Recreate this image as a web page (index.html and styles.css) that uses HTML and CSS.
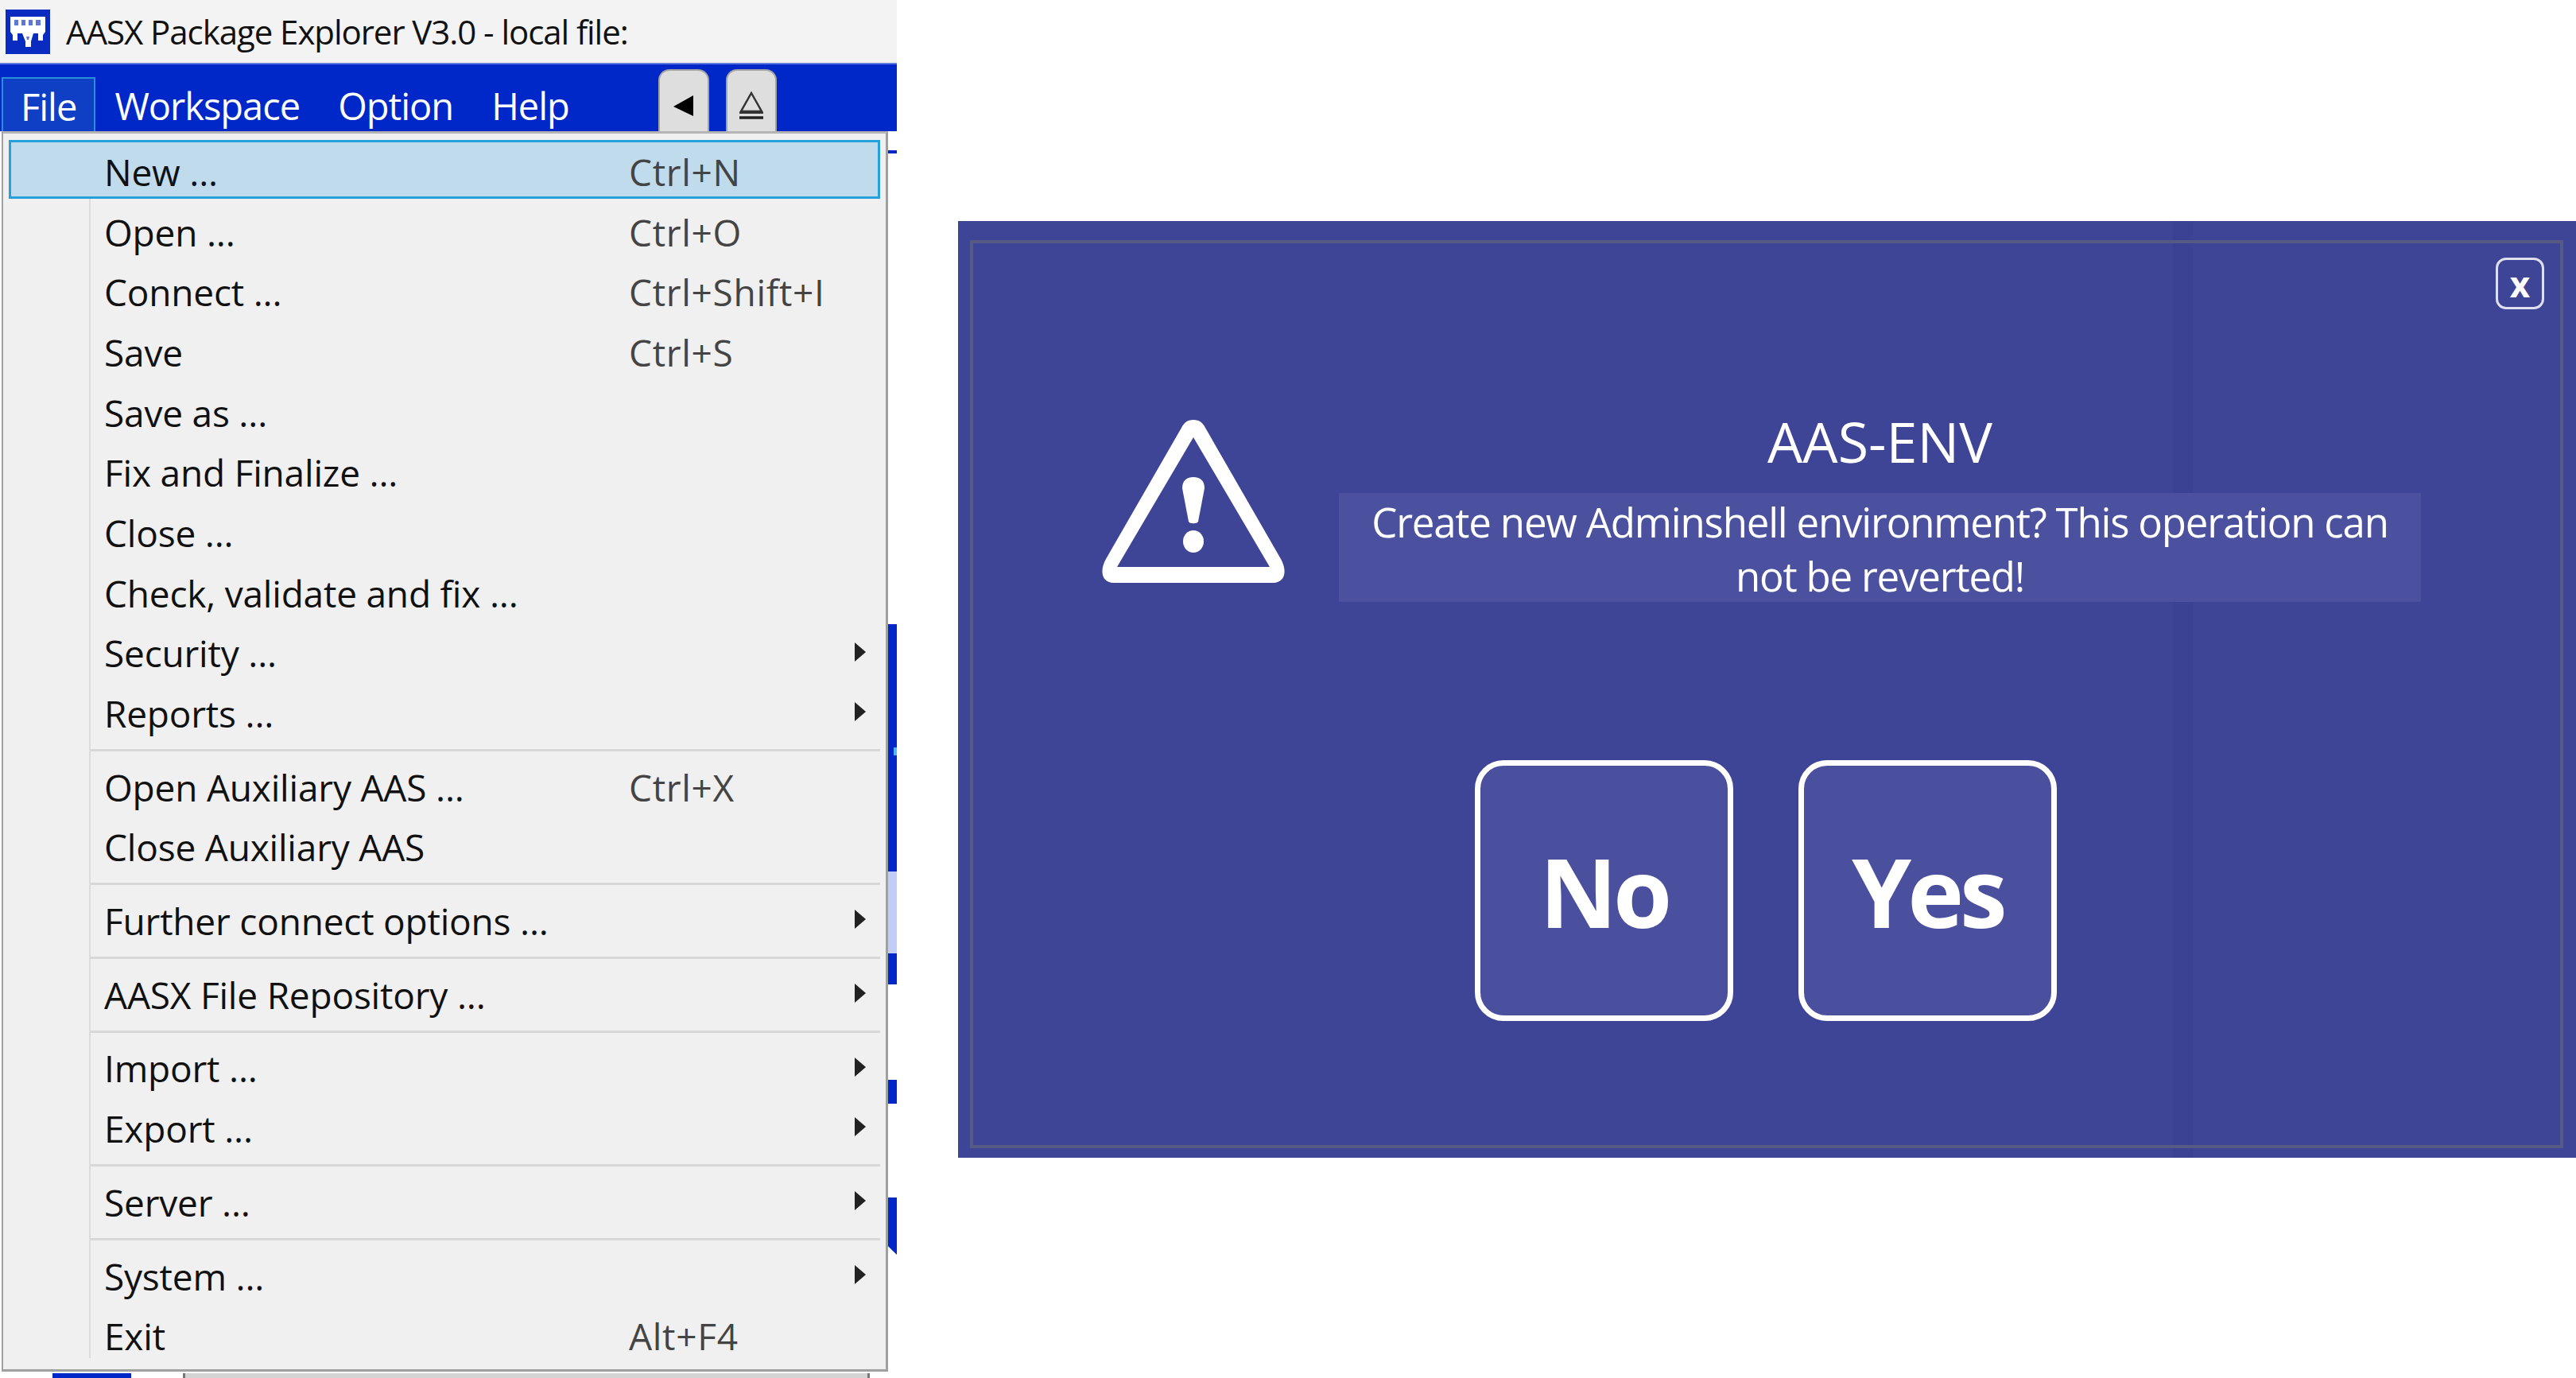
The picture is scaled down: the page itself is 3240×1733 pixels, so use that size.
FILE: index.html
```html
<!DOCTYPE html>
<html>
  <head>
    <meta charset="UTF-8" />
    <title>AASX Package Explorer</title>
    <link rel="stylesheet" href="styles.css">
  </head>
  <body>
    <div class="app">
      <div class="titlebar">
        <svg class="app-icon" viewBox="0 0 56 56">
          <rect width="56" height="56" fill="#0a2bc0" />
          <path d="M6 9H50V28L47 32V39H41V30H15V39H9V32L6 28z" fill="#fff" />
          <path d="M11 13h5v7h-5zM20 13h5v7h-5zM29 13h5v7h-5zM38 13h6v7h-6z" fill="#5f78d8" />
          <path d="M21 30H35L32 40V47H25V40z" fill="#fff" />
          <path d="M26 34h4l-1 4h-2z" fill="#5f78d8" />
        </svg>
        <span class="app-title">AASX Package Explorer V3.0 - local file:</span>
      </div>
      <div class="menubar">
        <div class="menubar-items">
          <span class="menubar-item active">File</span>
          <span class="menubar-item">Workspace</span>
          <span class="menubar-item">Option</span>
          <span class="menubar-item">Help</span>
        </div>
        <div class="tool-buttons">
          <span class="tool-button"><svg viewBox="0 0 26 26" width="26" height="26"><path d="M25 0v26L0 14z" fill="#000" /></svg></span>
          <span class="tool-button"><svg viewBox="0 0 34 36" width="34" height="36"><path d="M17 2L30 25H4z" fill="none" stroke="#333" stroke-width="2.5" /><path d="M2 27h30" stroke="#333" stroke-width="2" /><path d="M2 33h30" stroke="#222" stroke-width="3.5" /></svg></span>
        </div>
      </div>

      <div class="behind">
        <div class="strip-rule"></div>
        <div class="strip strip-a"></div>
        <div class="strip strip-b"></div>
        <div class="strip strip-c"></div>
        <div class="strip strip-d"></div>
        <div class="strip strip-e"></div>
        <div class="bottom-tabs">
          <span class="bottom-blue"></span>
          <span class="bottom-gray"></span>
        </div>
      </div>

      <div class="menu">
        <div class="row selected"><span class="label">New ...</span><span class="keys">Ctrl+N</span></div>
        <div class="row"><span class="label">Open ...</span><span class="keys">Ctrl+O</span></div>
        <div class="row"><span class="label">Connect ...</span><span class="keys">Ctrl+Shift+I</span></div>
        <div class="row"><span class="label">Save</span><span class="keys">Ctrl+S</span></div>
        <div class="row"><span class="label">Save as ...</span></div>
        <div class="row"><span class="label">Fix and Finalize ...</span></div>
        <div class="row"><span class="label">Close ...</span></div>
        <div class="row"><span class="label">Check, validate and fix ...</span></div>
        <div class="row sub"><span class="label">Security ...</span></div>
        <div class="row sub"><span class="label">Reports ...</span></div>
        <div class="sep"></div>
        <div class="row"><span class="label">Open Auxiliary AAS ...</span><span class="keys">Ctrl+X</span></div>
        <div class="row"><span class="label">Close Auxiliary AAS</span></div>
        <div class="sep"></div>
        <div class="row sub"><span class="label">Further connect options ...</span></div>
        <div class="sep"></div>
        <div class="row sub"><span class="label">AASX File Repository ...</span></div>
        <div class="sep"></div>
        <div class="row sub"><span class="label">Import ...</span></div>
        <div class="row sub"><span class="label">Export ...</span></div>
        <div class="sep"></div>
        <div class="row sub"><span class="label">Server ...</span></div>
        <div class="sep"></div>
        <div class="row sub"><span class="label">System ...</span></div>
        <div class="row"><span class="label">Exit</span><span class="keys">Alt+F4</span></div>
      </div>
    </div>

    <div class="dialog">
      <div class="dialog-frame">
        <div class="close-row"><span class="close-btn">x</span></div>
        <div class="message">
          <svg class="warn" viewBox="0 0 232 206">
            <path fill-rule="evenodd" fill="#fff" d="M116 0c8 0 12 4 15 10L226 175c8 14 6 30-10 30H16C0 205-2 189 6 175L101 10C104 4 108 0 116 0zM116 22L20 185H212z" />
            <path d="M116 72c9 0 14 5 14 14l-8 42c-1 3-11 3-12 0l-8-42c0-9 5-14 14-14z" fill="#fff" />
            <ellipse cx="116" cy="153" rx="13" ry="14" fill="#fff" />
          </svg>
          <div class="message-text">
            <div class="dialog-title">AAS-ENV</div>
            <div class="dialog-body">Create new Adminshell environment? This operation can not be reverted!</div>
          </div>
        </div>
        <div class="answers">
          <span class="answer">No</span>
          <span class="answer">Yes</span>
        </div>
      </div>
    </div>
  </body>
</html>
```

FILE: styles.css
```css
* {
  box-sizing: border-box;
}

body {
  margin: 0;
  height: 1733px;
  overflow: hidden;
  display: flex;
  align-items: flex-start;
  background-color: #fff;
  font-family: "Open Sans", "Noto Sans", sans-serif;
}

/* app window on the left */
.app {
  position: relative;
  width: 1128px;
  height: 1733px;
  flex-shrink: 0;
  display: flex;
  flex-direction: column;
}

.titlebar {
  height: 79px;
  display: flex;
  align-items: center;
  padding-left: 7px;
  background-color: #f3f3f3;
}

.app-icon {
  width: 56px;
  height: 56px;
}

.app-title {
  margin-left: 20px;
  font-size: 42px;
  letter-spacing: -1.05px;
  color: #111;
}

.menubar {
  height: 86px;
  display: flex;
  align-items: flex-end;
  justify-content: space-between;
  padding: 0 151px 0 2px;
  background-color: #0028c8;
  border-top: 2px solid #5f7be0;
}

.menubar-items {
  display: flex;
  height: 68px;
}

.menubar-item {
  margin-right: 48px;
  font-size: 47px;
  line-height: 72px;
  letter-spacing: -1px;
  color: #fff;
}

.menubar-item.active {
  margin-right: 24px;
  padding: 0 22px;
  background-color: #0f3fc4;
  border: 2px solid #2a8fd8;
  border-bottom: none;
  line-height: 70px;
}

.tool-buttons {
  display: flex;
  gap: 21px;
}

.tool-button {
  width: 64px;
  height: 78px;
  padding-top: 12px;
  display: flex;
  align-items: center;
  justify-content: center;
  background-color: #dedede;
  border: 2px solid #a4a4a4;
  border-bottom: none;
  border-radius: 14px 14px 0 0;
}

/* pieces of the main window that show around the menu */
.behind {
  flex: 1;
  display: flex;
  flex-direction: column;
  align-items: flex-end;
}

.strip-rule {
  width: 11px;
  height: 4px;
  margin-top: 24px;
  background-color: #0028c8;
}

.strip {
  width: 11px;
  background-color: #0028c8;
}

.strip-a {
  height: 311px;
  margin-top: 592px;
  background: linear-gradient(#4db8ff, #4db8ff) no-repeat right 155px / 4px 10px, #0028c8;
}

.strip-b {
  height: 103px;
  background-color: #c0cdf8;
}

.strip-c {
  height: 39px;
}

.strip-d {
  height: 30px;
  margin-top: 120px;
}

.strip-e {
  height: 72px;
  margin-top: 118px;
  clip-path: polygon(0 0, 100% 0, 100% 100%, 0 85%);
}

.bottom-tabs {
  align-self: stretch;
  display: flex;
  margin-top: 149px;
  height: 6px;
}

.bottom-blue {
  width: 99px;
  margin-left: 66px;
  background-color: #0028c8;
}

.bottom-gray {
  width: 864px;
  margin-left: 65px;
  background-color: #d4d4d4;
  border-left: 3px solid #777;
  border-right: 3px solid #777;
}

/* file menu */
.menu {
  position: absolute;
  top: 165px;
  left: 2px;
  width: 1115px;
  height: 1560px;
  padding: 11px 7px 0 7px;
  background-color: #f0f0f0;
  border: 3px solid #a0a0a0;
  border-top-color: #b4b4b4;
  border-left-width: 2px;
}

.menu::before {
  content: "";
  position: absolute;
  top: 11px;
  bottom: 14px;
  left: 108px;
  width: 2px;
  background-color: #dcdcdc;
}

.row {
  position: relative;
  height: 75.7px;
  display: flex;
  align-items: center;
  padding-left: 120px;
  font-size: 46px;
  letter-spacing: -0.2px;
  color: #111;
}

.row.selected {
  height: 74px;
  margin: -3px 0 3.7px;
  padding: 6px 0 0 117px;
  background-color: #c0dcec;
  border: 3px solid #26a0da;
}

.label {
  width: 660px;
  flex-shrink: 0;
}

.keys {
  letter-spacing: 0.7px;
  color: #444;
}

.sub::after {
  content: "";
  position: absolute;
  right: 18px;
  top: 24px;
  border-left: 14px solid #222;
  border-top: 12px solid transparent;
  border-bottom: 12px solid transparent;
}

.sep {
  height: 3px;
  margin: 7px 0 7px 103px;
  background-color: #d7d7d7;
}

/* confirmation dialog */
.dialog {
  width: 2035px;
  height: 1178px;
  margin: 278px 0 0 77px;
  padding: 24px 16px 12px 15px;
  background: linear-gradient(to right, #3f4596 0, #3f4596 1528px, #3b4193 1528px, #3b4193 1553px, #3f4596 1553px);
}

.dialog-frame {
  height: 100%;
  padding: 18px 20px 0 0;
  border: 4px solid #565b85;
}

.close-row {
  display: flex;
  justify-content: flex-end;
}

.close-btn {
  width: 61px;
  height: 65px;
  display: flex;
  align-items: center;
  justify-content: center;
  border: 3px solid #dfe0ee;
  border-radius: 13px;
  font-size: 44px;
  font-weight: 700;
  line-height: 1;
  color: #fff;
}

.message {
  display: flex;
  margin-top: 135px;
}

.warn {
  width: 232px;
  height: 206px;
  margin: 4px 0 0 161px;
  flex-shrink: 0;
}

.message-text {
  width: 1361px;
  margin-left: 67px;
  text-align: center;
}

.dialog-title {
  height: 96px;
  font-size: 70px;
  line-height: 62px;
  color: #fff;
}

.dialog-body {
  height: 137px;
  padding: 2px 30px 0;
  background-color: #4b519e;
  font-size: 51px;
  line-height: 68px;
  letter-spacing: -1.2px;
  color: #fff;
}

.answers {
  display: flex;
  gap: 82px;
  margin: 199px 0 0 631px;
}

.answer {
  width: 325px;
  height: 328px;
  display: flex;
  align-items: center;
  justify-content: center;
  background-color: #4a4f9e;
  border: 7px solid #fff;
  border-radius: 36px;
  font-size: 120px;
  font-weight: 700;
  letter-spacing: -5px;
  color: #fff;
}
```
